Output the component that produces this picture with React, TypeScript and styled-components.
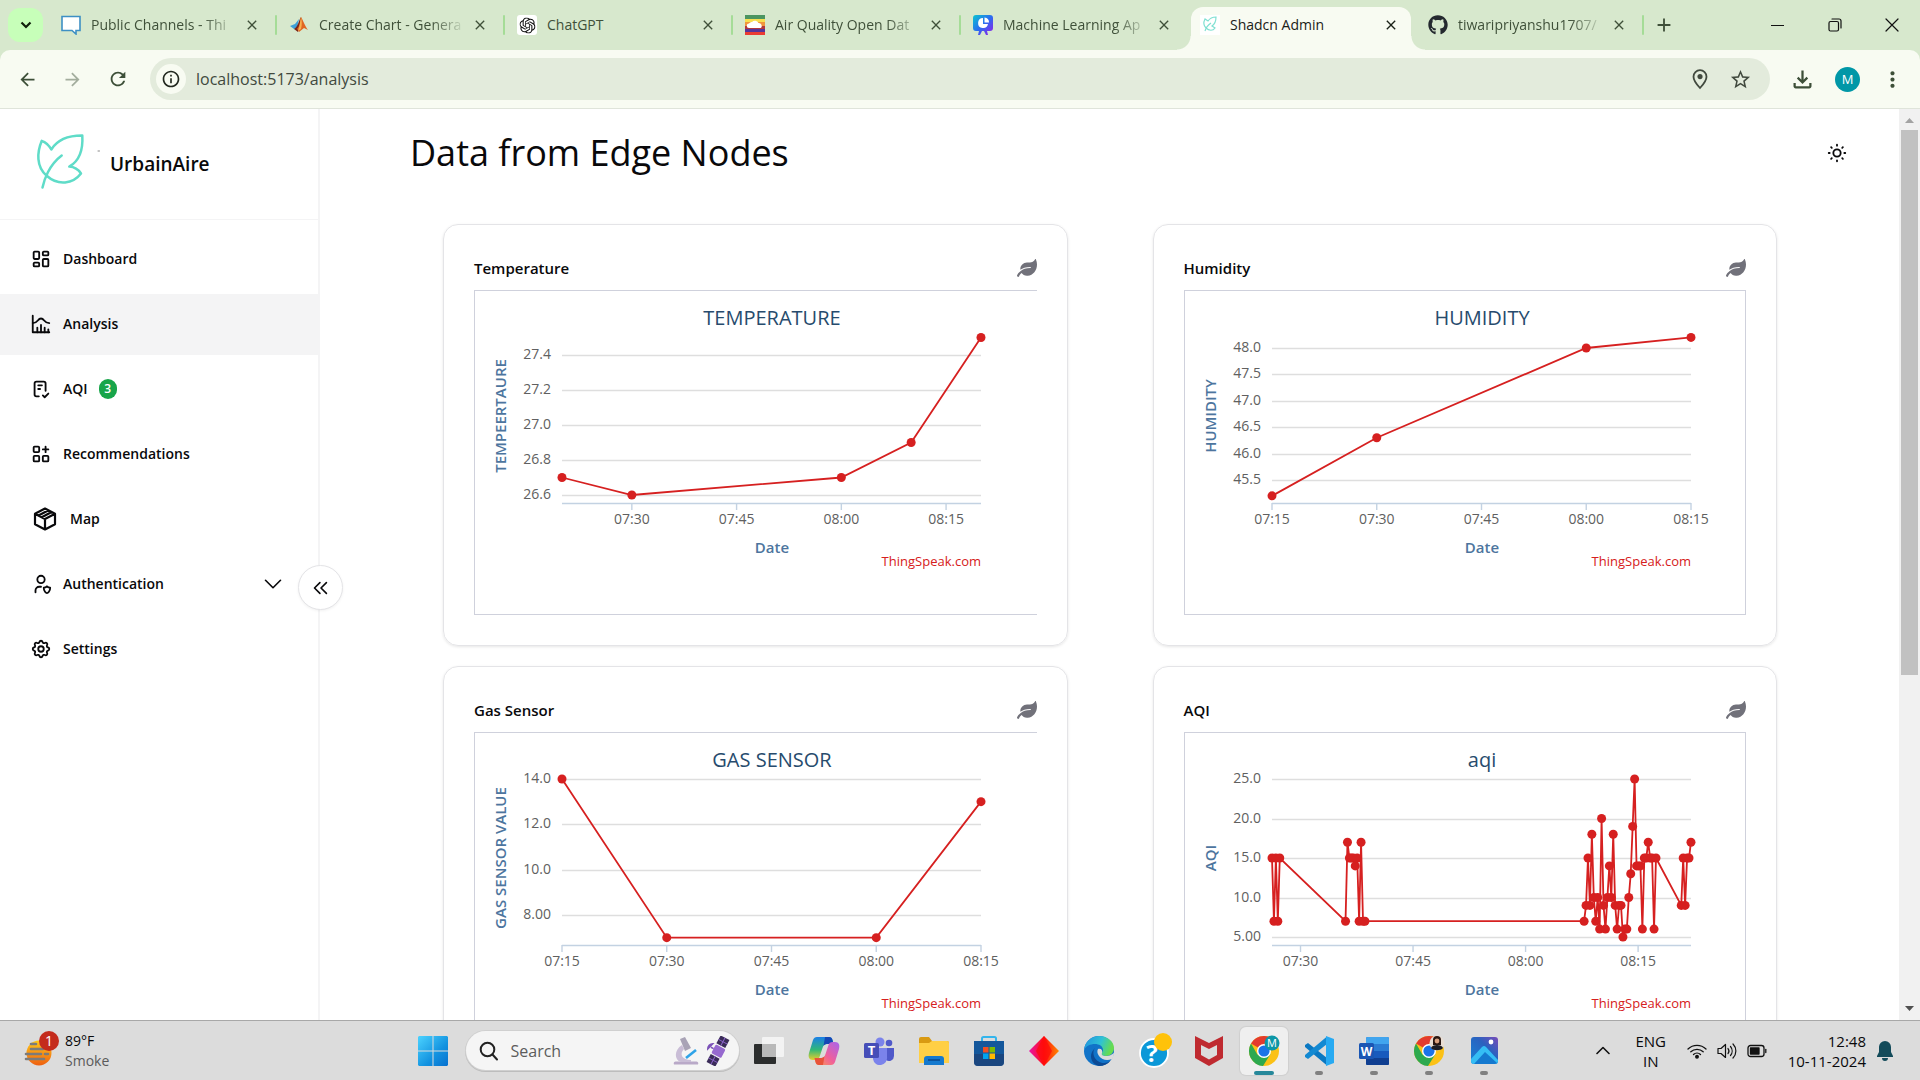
import React from "react";
import styled, { createGlobalStyle, css } from "styled-components";
import {
  TbApps,
  TbChartHistogram,
  TbChecklist,
  TbChevronDown,
  TbChevronsLeft,
  TbLayoutDashboard,
  TbSettings,
  TbSun,
  TbUserShield,
} from "react-icons/tb";
import { FaGithub, FaLeaf } from "react-icons/fa";
import { SiOpenai } from "react-icons/si";
import {
  MdArrowBack,
  MdArrowForward,
  MdClose,
  MdMoreVert,
  MdOutlineFileDownload,
  MdOutlineInfo,
  MdRefresh,
  MdStarOutline,
  MdAdd,
} from "react-icons/md";

const ui = `"Open Sans", "Noto Sans", sans-serif`;

const GlobalStyle = createGlobalStyle`
  *, *::before, *::after { box-sizing: border-box; }
  body { margin: 0; font-family: ${ui}; color: #09090b; background: #fff; }
  button, input { font: inherit; color: inherit; border: 0; background: none; padding: 0; margin: 0; outline: 0; }
  a { color: inherit; text-decoration: none; }
  svg { display: block; flex: none; }
`;

const Screen = styled.div`
  height: 100vh;
  display: flex;
  flex-direction: column;
  overflow: hidden;
`;

const center = css`
  display: flex;
  align-items: center;
  justify-content: center;
`;

/* ---------- browser chrome ---------- */

const TabStrip = styled.header`
  height: 50px;
  display: flex;
  background: #d7e8cd;
  padding-left: 8px;
  color: #3f5039;
`;

const TabSearch = styled.button`
  ${center}
  width: 35px;
  height: 34px;
  margin: 8px 6px 0 0;
  border-radius: 12px;
  background: #c7ffb9;
  color: #10200b;
`;

const Tab = styled.div<{ $active?: boolean; $divider?: boolean }>`
  position: relative;
  display: flex;
  align-items: center;
  width: 228px;
  height: 50px;
  padding: 0 13px 0 12px;
  ${(p) =>
    p.$divider &&
    css`
      &::after {
        content: "";
        position: absolute;
        right: 0;
        top: 15px;
        width: 2px;
        height: 20px;
        border-radius: 1px;
        background: #a5dc97;
      }
    `}
  ${(p) =>
    p.$active &&
    css`
      width: 220px;
      height: 43px;
      margin: 7px 5px 0 2px;
      padding: 0 8px 7px 9px;
      border-radius: 12px 12px 0 0;
      background: #f8fbf2;
      color: #1a2117;
      &::before,
      &::after {
        content: "";
        position: absolute;
        bottom: 0;
        width: 14px;
        height: 14px;
      }
      &::before {
        left: -14px;
        background: radial-gradient(circle at 0 0, transparent 13px, #f8fbf2 14px);
      }
      &::after {
        right: -14px;
        background: radial-gradient(circle at 100% 0, transparent 13px, #f8fbf2 14px);
      }
    `}
`;

const TabTitle = styled.button<{ $fade?: boolean }>`
  flex: 1;
  min-width: 0;
  margin: 0 2px 0 10px;
  font-size: 14px;
  line-height: 24px;
  text-align: left;
  white-space: nowrap;
  overflow: hidden;
  ${(p) => p.$fade && css`mask-image: linear-gradient(90deg, #000 76%, transparent 100%);`}
`;

const TabClose = styled.button`
  ${center}
  width: 24px;
  height: 24px;
`;

const NewTab = styled.button`
  ${center}
  width: 40px;
  height: 50px;
`;

const WindowControls = styled.div`
  display: flex;
  margin-left: auto;
`;

const WindowButton = styled.button`
  ${center}
  width: 57px;
  height: 50px;
  color: #000;
`;

const ToolbarBack = styled.div`
  background: #d7e8cd;
`;

const Toolbar = styled.div`
  height: 59px;
  display: flex;
  align-items: center;
  padding: 0 5px;
  background: #f8fbf2;
  border-radius: 10px 10px 0 0;
  border-bottom: 1px solid #dfe4da;
  color: #3d4f38;
`;

const ToolButton = styled.button<{ $dim?: boolean }>`
  ${center}
  width: 45px;
  height: 42px;
  opacity: ${(p) => (p.$dim ? 0.45 : 1)};
`;

const Omnibox = styled.label`
  flex: 1;
  height: 42px;
  margin: 0 10px;
  padding: 0 10px 0 6px;
  display: flex;
  align-items: center;
  border-radius: 21px;
  background: #e3ebdc;
  color: #41493e;
`;

const SiteInfo = styled.span`
  ${center}
  width: 30px;
  height: 30px;
  border-radius: 50%;
  background: #f8fbf2;
  color: #22281f;
`;

const Address = styled.input`
  flex: 1;
  margin-left: 10px;
  font-size: 16px;
  line-height: 24px;
`;

const OmniboxButton = styled.button`
  ${center}
  width: 40px;
  height: 40px;
`;

const Avatar = styled.span`
  ${center}
  width: 25px;
  height: 25px;
  border-radius: 50%;
  background: #0097a7;
  color: #fff;
  font-size: 13px;
`;

/* ---------- page ---------- */

const Page = styled.div`
  flex: 1;
  min-height: 0;
  display: flex;
`;

const Sidebar = styled.aside`
  position: relative;
  width: 320px;
  border-right: 2px solid #f4f4f5;
`;

const Brand = styled.div`
  height: 111px;
  display: flex;
  align-items: center;
  gap: 8px;
  padding-left: 36px;
  border-bottom: 1px solid #f4f4f5;
  font-size: 19px;
  font-weight: 600;
`;

const Nav = styled.nav`
  display: flex;
  flex-direction: column;
  gap: 4px;
  padding-top: 9px;
`;

const NavLink = styled.a<{ $active?: boolean; $wide?: boolean }>`
  display: flex;
  align-items: center;
  height: 61px;
  padding: 0 30px 2px ${(p) => (p.$wide ? 33 : 30)}px;
  gap: ${(p) => (p.$wide ? 13 : 11)}px;
  background: ${(p) => (p.$active ? "#f4f4f5" : "transparent")};
  font-size: 14px;
  font-weight: 600;
`;

const NavEnd = styled.span`
  margin-left: auto;
`;

const Badge = styled.span`
  ${center}
  width: 18px;
  height: 20px;
  border-radius: 9px;
  background: #18a54a;
  color: #fff;
  font-size: 12px;
`;

const Collapse = styled.button`
  ${center}
  position: absolute;
  top: 456px;
  right: -25px;
  width: 45px;
  height: 45px;
  border: 1px solid #e4e4e7;
  border-radius: 50%;
  background: #fff;
  box-shadow: 0 1px 3px rgba(0, 0, 0, 0.06);
`;

const Main = styled.main`
  flex: 1;
  min-width: 0;
  overflow: hidden;
`;

const Heading = styled.div`
  display: flex;
  align-items: center;
  justify-content: space-between;
  height: 87px;
  margin-bottom: 28px;
  padding: 0 50px 0 90px;
`;

const Title = styled.h1`
  margin: 0;
  font-size: 36px;
  font-weight: 400;
  line-height: 50px;
`;

const ThemeButton = styled.button`
  ${center}
  width: 24px;
  height: 24px;
`;

const Cards = styled.div`
  display: grid;
  grid-template-columns: 1fr 1fr;
  gap: 20px 85px;
  padding: 0 122px 0 123px;
`;

const Card = styled.section`
  min-width: 0;
  padding: 30px;
  border: 1px solid #e4e4e7;
  border-radius: 15px;
  box-shadow: 0 1px 3px rgba(0, 0, 0, 0.1);
`;

const CardHead = styled.div`
  display: flex;
  align-items: center;
  justify-content: space-between;
  height: 35px;
  padding-bottom: 9px;
  color: #71717a;
`;

const CardTitle = styled.h2`
  margin: 0;
  font-size: 15px;
  line-height: 24px;
  font-weight: 600;
  color: #09090b;
`;

const Frame = styled.div<{ $open?: boolean }>`
  height: 325px;
  overflow: hidden;
  border: 1px solid #cfd1dc;
  ${(p) => p.$open && css`border-right: 0;`}
`;

const ChartSvg = styled.svg`
  font-family: ${ui};
  .title { font-size: 20px; fill: #274b6d; text-anchor: middle; }
  .axis { font-size: 15px; font-weight: 600; fill: #4d759e; text-anchor: middle; }
  .tick { font-size: 14px; fill: #606060; text-anchor: middle; }
  .value { font-size: 14px; fill: #606060; text-anchor: end; }
  .credit { font-size: 13px; fill: #d62020; text-anchor: end; }
`;

const ScrollTrack = styled.div`
  width: 21px;
  display: flex;
  flex-direction: column;
  align-items: center;
  justify-content: space-between;
  padding: 9px 0;
  background: #f1f1f1;
`;

const ScrollThumb = styled.div`
  width: 17px;
  height: 61%;
  margin: 7px 0 auto;
  background: #c1c1c1;
`;

/* ---------- taskbar ---------- */

const Taskbar = styled.footer`
  height: 60px;
  display: flex;
  align-items: center;
  border-top: 1px solid #a8a8a8;
  background: #dcdcdc;
  font-size: 15px;
  line-height: 20px;
`;

const TaskSide = styled.div<{ $end?: boolean }>`
  flex: 1;
  display: flex;
  align-items: center;
  justify-content: ${(p) => (p.$end ? "flex-end" : "flex-start")};
  padding: ${(p) => (p.$end ? "0 27px 0 0" : "0 0 0 24px")};
`;

const Weather = styled.button`
  display: flex;
  align-items: center;
  gap: 5px;
  text-align: left;
  font-size: 14px;
  line-height: 20px;
`;

const Muted = styled.span`
  display: block;
  color: #5a5a5a;
`;

const TaskApps = styled.div`
  display: flex;
  align-items: center;
`;

const TaskButton = styled.button`
  ${center}
  position: relative;
  width: 55px;
  height: 59px;
`;

const Tile = styled.span<{ $active?: boolean }>`
  ${center}
  width: 48px;
  height: 48px;
  border-radius: 6px;
  ${(p) => p.$active && css`background: #efefef; box-shadow: 0 0 1px 1px rgba(0, 0, 0, 0.06);`}
`;

const Running = styled.span<{ $active?: boolean }>`
  position: absolute;
  bottom: 5px;
  width: ${(p) => (p.$active ? 20 : 8)}px;
  height: 4px;
  border-radius: 2px;
  background: ${(p) => (p.$active ? "#27889a" : "#808080")};
`;

const SearchBox = styled.label`
  display: flex;
  align-items: center;
  width: 273px;
  height: 39px;
  margin: 0 3px 0 5px;
  padding: 0 8px 0 13px;
  border-radius: 20px;
  background: #f5f5f5;
  box-shadow: 0 0 0 1px #d0d0d0, 0 1px 0 1px #bdbdbd;
`;

const SearchInput = styled.input`
  flex: 1;
  min-width: 0;
  margin-left: 12px;
  font-size: 16px;
  &::placeholder { color: #5c5c5c; opacity: 1; }
`;

const TrayButton = styled.button<{ $w: number }>`
  ${center}
  width: ${(p) => p.$w}px;
  height: 48px;
  line-height: 20px;
`;

const Clock = styled.button`
  margin-left: 16px;
  margin-right: 11px;
  text-align: right;
  line-height: 20px;
`;

/* ---------- charts ---------- */

type Point = [number, number];
type ChartData = {
  name: string;
  title: string;
  yTitle: string;
  open?: boolean;
  minutes: Point;
  ticks: [string, number][];
  rows: string[];
  rowY: Point;
  points: Point[];
};

const LEFT = 87;
const RIGHT = 506;

const quarter: [string, number][] = [
  ["07:15", 15],
  ["07:30", 30],
  ["07:45", 45],
  ["08:00", 60],
  ["08:15", 75],
];

const aqiSeries = (): Point[] => {
  const runs: [number, number[]][] = [
    [26.2, [15, 7, 15, 7, 15]],
    [36, [7, 17, 15, 15, 15, 14, 15, 7, 17, 7, 7]],
    [67.8, [7, 9, 15, 9, 18, 10, 7, 10, 6, 20, 9, 6, 10, 14, 10, 18, 9, 6, 9, 9, 5, 6, 6, 10, 13, 19, 25, 14, 14, 14, 6, 15, 15, 17, 15, 15, 6, 15]],
    [80.75, [9, 15, 9, 15, 15, 17]],
  ];
  return runs.flatMap(([start, values]) => values.map((v, i): Point => [start + i * 0.259, v]));
};

const charts: ChartData[] = [
  {
    name: "Temperature",
    title: "TEMPERATURE",
    yTitle: "TEMPEERTAURE",
    open: true,
    minutes: [20, 80],
    ticks: quarter.slice(1),
    rows: ["27.4", "27.2", "27.0", "26.8", "26.6"],
    rowY: [64, 204],
    points: [[20, 26.7], [30, 26.6], [60, 26.7], [70, 26.9], [80, 27.5]],
  },
  {
    name: "Humidity",
    title: "HUMIDITY",
    yTitle: "HUMIDITY",
    minutes: [15, 75],
    ticks: quarter,
    rows: ["48.0", "47.5", "47.0", "46.5", "46.0", "45.5"],
    rowY: [57, 189],
    points: [[15, 45.2], [30, 46.3], [60, 48], [75, 48.2]],
  },
  {
    name: "Gas Sensor",
    title: "GAS SENSOR",
    yTitle: "GAS SENSOR VALUE",
    open: true,
    minutes: [15, 75],
    ticks: quarter,
    rows: ["14.0", "12.0", "10.0", "8.00"],
    rowY: [46, 182],
    points: [[15, 14], [30, 7], [60, 7], [75, 13]],
  },
  {
    name: "AQI",
    title: "aqi",
    yTitle: "AQI",
    minutes: [26.2, 82.05],
    ticks: quarter.slice(1),
    rows: ["25.0", "20.0", "15.0", "10.0", "5.00"],
    rowY: [46, 204],
    points: aqiSeries(),
  },
];

function Chart({ data }: { data: ChartData }) {
  const { minutes, rows, rowY } = data;
  const x = (m: number) => LEFT + ((m - minutes[0]) / (minutes[1] - minutes[0])) * (RIGHT - LEFT);
  const hi = Number(rows[0]);
  const lo = Number(rows[rows.length - 1]);
  const y = (v: number) => rowY[0] + ((hi - v) / (hi - lo)) * (rowY[1] - rowY[0]);
  return (
    <ChartSvg width="562" height="323" viewBox="0 0 562 323" role="img" aria-label={data.name}>
      <text className="title" x="297" y="34">{data.title}</text>
      {rows.map((r) => (
        <g key={r}>
          <line x1={LEFT} x2={RIGHT} y1={Math.round(y(Number(r))) + 0.5} y2={Math.round(y(Number(r))) + 0.5} stroke="#dedede" strokeWidth="1.3" />
          <text className="value" x="76" y={Math.round(y(Number(r))) + 4}>{r}</text>
        </g>
      ))}
      <line x1={LEFT} x2={RIGHT} y1="212.5" y2="212.5" stroke="#c3d2e2" strokeWidth="1.4" />
      {data.ticks.map(([label, m]) => (
        <g key={label}>
          <line x1={x(m)} x2={x(m)} y1="212" y2="219" stroke="#c3d2e2" strokeWidth="1.4" />
          <text className="tick" x={x(m)} y="233">{label}</text>
        </g>
      ))}
      <text className="axis" x="297" y="262">Date</text>
      <text className="axis" transform="translate(31 125) rotate(-90)">{data.yTitle}</text>
      <polyline points={data.points.map(([m, v]) => `${x(m)},${y(v)}`).join(" ")} fill="none" stroke="#d62020" strokeWidth="1.8" />
      {data.points.map(([m, v], i) => (
        <circle key={i} cx={x(m)} cy={y(v)} r="4.5" fill="#d62020" />
      ))}
      <text className="credit" x={RIGHT} y="275">ThingSpeak.com</text>
    </ChartSvg>
  );
}

/* ---------- drawings ---------- */

const LeafLogo = () => (
  <svg width="66" height="60" viewBox="36 34 66 60" fill="none" stroke="#5fdcc8" strokeWidth="2.5" strokeLinecap="round" strokeLinejoin="round">
    <path d="M42.5 87.5C44 80 49 65 61.7 55.5M46.7 75.8C36 67 37 52 41.7 40.9C45 42 49 45.5 51.3 49.5C58 39 68 35.5 82.3 35.6C83 47 81 60 69.3 66.6C74 67 78 69 81 73.5C73 84 58 86 46.7 75.8" />
    <path d="M98 51h1.5" stroke="#888" strokeWidth="1" />
  </svg>
);

const BoxIcon = () => (
  <svg width="24" height="24" viewBox="0 0 24 24" fill="none" stroke="currentColor" strokeWidth="2.2" strokeLinejoin="round">
    <path d="M12 1.5l10 5.2v10.6l-10 5.2l-10-5.2V6.7zM2 6.7l10 5.2l10-5.2M12 11.9v10.6M5.5 8.5l10-5.2M8.7 10.2l10-5.2" />
  </svg>
);

const ChatIcon = () => (
  <svg width="20" height="20" viewBox="0 0 20 20">
    <path d="M1 1.5h18v14h-4v3.5l-4-3.5H1z" fill="#fff" stroke="#3d8fc4" strokeWidth="1.6" />
  </svg>
);

const MatlabIcon = () => (
  <svg width="20" height="20" viewBox="0 0 20 20">
    <path d="M1 11l5-2 4-5-2 9-3 1z" fill="#3e9fd8" />
    <path d="M5 14c4-2 5-9 7-12l1 6-4 9z" fill="#7a2418" />
    <path d="M12 2c2 3 4 9 7 13l-4-2-5 4c-1-2-1-2-2-3 3-3 3-8 4-12z" fill="#e06622" />
    <path d="M12 2c1 4 1 8 0 12l-3 2c2-5 2-10 3-14z" fill="#f8b04e" />
  </svg>
);

const GptIcon = () => (
  <svg width="20" height="20" viewBox="0 0 20 20">
    <rect width="20" height="20" rx="3" fill="#fff" />
    <SiOpenai x="2.5" y="2.5" width="15" height="15" color="#111" />
  </svg>
);

const AirIcon = () => (
  <svg width="20" height="20" viewBox="0 0 20 20">
    <rect width="20" height="4" fill="#4b9560" />
    <rect y="4" width="20" height="3" fill="#f7df4f" />
    <rect y="7" width="20" height="4" fill="#f0953e" />
    <rect y="11" width="20" height="3" fill="#b4373c" />
    <rect y="14" width="20" height="3" fill="#55349b" />
    <rect y="17" width="20" height="3" fill="#ea3c33" />
    <path d="M4 13a2 2 0 0 1 0-4.500 3 3 0 0 1 3-1.500 4 4 0 0 1 6.500 1 3 3 0 0 1 2.500 5z" fill="#fff" />
  </svg>
);

const MlIcon = () => (
  <svg width="20" height="20" viewBox="0 0 20 20">
    <defs>
      <linearGradient id="ml" x1="0" y1="0" x2="1" y2="1">
        <stop offset="0" stopColor="#09c6cf" />
        <stop offset=".5" stopColor="#2b6cf0" />
        <stop offset="1" stopColor="#9a1be8" />
      </linearGradient>
    </defs>
    <path d="M3 0h14a3 3 0 0 1 3 3v10a3 3 0 0 1-3 3h-3l1 4h-2l-2-4H9l-2 4H5l1-4H3a3 3 0 0 1-3-3V3a3 3 0 0 1 3-3z" fill="url(#ml)" />
    <path d="M10 3a5 5 0 1 0 5 6h-5z" fill="#fff" />
    <path d="M11.5 2.5V7.5H16a5 5 0 0 0-4.5-5z" fill="#fff" />
  </svg>
);

const LeafFavicon = () => (
  <svg width="20" height="20" viewBox="0 0 20 20" fill="none">
    <rect width="20" height="20" fill="#fff" />
    <path d="M5 16c1-4 3-6 6-8M6 13C3 10 4 6 5 4l3 2c2-3 5-4 8-4 0 4-1 7-4 9l3 2c-2 3-6 3-9 0" stroke="#7fe0d2" strokeWidth="1.2" />
  </svg>
);

const WeatherIcon = () => (
  <svg width="36" height="40" viewBox="0 0 36 40">
    <defs>
      <linearGradient id="sun" x1="0" y1="0" x2="0" y2="1">
        <stop offset="0" stopColor="#ffc91a" />
        <stop offset="1" stopColor="#ee5f10" />
      </linearGradient>
    </defs>
    <circle cx="15" cy="22" r="12.5" fill="url(#sun)" />
    <path d="M7 13h5M7 18h12M2 23h15M21 23h3M4 28h16M2 28h1" stroke="#7b7b7b" strokeWidth="2.6" strokeLinecap="round" />
    <circle cx="25" cy="10" r="10" fill="#c42b1c" />
    <text x="25" y="15" fill="#fff" fontSize="14" textAnchor="middle">1</text>
  </svg>
);

const StartIcon = () => (
  <svg width="30" height="30" viewBox="0 0 30 30">
    <defs>
      <linearGradient id="win" x1="0" y1="0" x2="30" y2="30" gradientUnits="userSpaceOnUse">
        <stop offset="0" stopColor="#4cd3ff" />
        <stop offset=".6" stopColor="#1393e0" />
        <stop offset="1" stopColor="#0670cf" />
      </linearGradient>
    </defs>
    <path d="M1 0h13.5v14.5H0V1zM15.5 0H29l1 1v13.5H15.5zM0 15.5h14.5V30H1l-1-1zM15.5 15.5H30V29l-1 1H15.5z" fill="url(#win)" />
  </svg>
);

const SearchGlass = () => (
  <svg width="20" height="20" viewBox="0 0 20 20" fill="none" stroke="#222" strokeWidth="2" strokeLinecap="round">
    <circle cx="8.5" cy="8.5" r="6.8" />
    <path d="M13.5 13.5L18 18.5" />
  </svg>
);

const SearchArt = () => (
  <svg width="58" height="30" viewBox="0 0 58 30">
    <path d="M3 25.500h20a2 2 0 0 1 2 3H1a2 2 0 0 1 2-3z" fill="#b9a9c8" />
    <path d="M9 9C1 14 1 24 8 26h10v-2c-9 0-12-6-7-11z" fill="#c9bdd6" />
    <path d="M7 3l5-2 6 11-6 3z" fill="#a9a3b6" />
    <path d="M13 22l10-8" stroke="#2fa3e8" strokeWidth="2.6" />
    <g transform="rotate(28 45 15)">
      <rect x="40" y="0" width="10" height="9" fill="#3a2c58" />
      <rect x="40" y="21" width="10" height="9" fill="#3a2c58" />
      <path d="M45 0v9M40 4.5h10M45 21v9M40 25.5h10" stroke="#8a63c8" strokeWidth="1" />
      <rect x="40" y="10" width="11" height="10" rx="1.5" fill="#9669cf" />
      <path d="M40 15h-3M37 11a5 5 0 0 0-2 7z" fill="#7c52b8" stroke="#7c52b8" strokeWidth="1.5" />
    </g>
  </svg>
);

const TaskViewIcon = () => (
  <svg width="30" height="30" viewBox="0 0 30 30">
    <rect y="8" width="22" height="20" rx="1" fill="#2b2d2d" />
    <rect x="8" y="1" width="22" height="20" rx="1" fill="#f4f4f4" fillOpacity=".92" />
    <rect x="8" y="8" width="14" height="13" fill="#b9b9b9" />
  </svg>
);

const CopilotIcon = () => (
  <svg width="32" height="30" viewBox="0 0 32 30">
    <defs>
      <linearGradient id="cpa" x1="0" y1="0" x2="0" y2="1">
        <stop offset="0" stopColor="#1b7fe8" />
        <stop offset=".55" stopColor="#30b878" />
        <stop offset="1" stopColor="#e8cf2c" />
      </linearGradient>
      <linearGradient id="cpb" x1="1" y1="0" x2="0" y2="1">
        <stop offset="0" stopColor="#a764ee" />
        <stop offset=".55" stopColor="#f0609a" />
        <stop offset="1" stopColor="#fba14a" />
      </linearGradient>
    </defs>
    <path d="M9 1h12c2 0 3 1 3.5 3l1 4h-6c-3 0-4 1-5 4l-3 9c-.6 2-2 3-4 3H5c-4 0-5-3-4-7L5 4c.8-2 2-3 4-3z" fill="url(#cpa)" />
    <path d="M17 1h4c2 0 3 1 3.5 3l1 4h-6c-2 0-3 .6-4 2z" fill="#1548b5" />
    <path d="M23 29H11c-2 0-3-1-3.5-3l-1-4h6c3 0 4-1 5-4l3-9c.6-2 2-3 4-3h2.5c4 0 5 3 4 7L27 26c-.8 2-2 3-4 3z" fill="url(#cpb)" />
    <path d="M15 29h-4c-2 0-3-1-3.5-3l-1-4h6c2 0 3-.6 4-2z" fill="#e8533a" />
  </svg>
);

const TeamsIcon = () => (
  <svg width="30" height="28" viewBox="0 0 30 28">
    <circle cx="16" cy="5" r="4.5" fill="#7b83eb" />
    <circle cx="25" cy="6" r="3.3" fill="#5059c9" />
    <path d="M20 11h10v8a5 5 0 0 1-8 4z" fill="#5059c9" />
    <path d="M9 11h14v9a7 7 0 0 1-14 2z" fill="#7b83eb" />
    <rect y="6" width="15" height="15" rx="1.5" fill="#464eb8" />
    <text x="7.5" y="18" fontSize="13" fontWeight="700" fill="#fff" textAnchor="middle">T</text>
  </svg>
);

const FolderIcon = () => (
  <svg width="30" height="28" viewBox="0 0 30 28">
    <path d="M0 2a2 2 0 0 1 2-2h8l3 4h15a2 2 0 0 1 2 2v4H0z" fill="#d99a12" />
    <path d="M0 6h10l3-2h15a2 2 0 0 1 2 2v20H0z" fill="#ffcf45" />
    <path d="M5 28v-6a3 3 0 0 1 3-3h14a3 3 0 0 1 3 3v6z" fill="#1579ce" />
    <path d="M9 23h12" stroke="#0a4a90" strokeWidth="1.6" />
  </svg>
);

const StoreIcon = () => (
  <svg width="30" height="30" viewBox="0 0 30 30">
    <path d="M8 6V2.5A1.5 1.5 0 0 1 9.5 1h11A1.5 1.5 0 0 1 22 2.5V6" fill="none" stroke="#34b5ec" strokeWidth="2" />
    <path d="M0 5h30v21a4 4 0 0 1-4 4H4a4 4 0 0 1-4-4z" fill="#14579b" />
    <path d="M0 18h30v8a4 4 0 0 1-4 4H4a4 4 0 0 1-4-4z" fill="#1c3f73" fillOpacity=".7" />
    <rect x="9" y="11" width="5.5" height="5.5" fill="#f25022" />
    <rect x="15.5" y="11" width="5.5" height="5.5" fill="#7fba00" />
    <rect x="9" y="17.5" width="5.5" height="5.5" fill="#00a4ef" />
    <rect x="15.5" y="17.5" width="5.5" height="5.5" fill="#ffb900" />
  </svg>
);

const DiamondIcon = () => (
  <svg width="30" height="30" viewBox="0 0 30 30">
    <defs>
      <linearGradient id="dia">
        <stop offset="0" stopColor="#e815a8" />
        <stop offset=".5" stopColor="#ff1010" />
        <stop offset="1" stopColor="#ff8a00" />
      </linearGradient>
    </defs>
    <path d="M15 0l15 15-15 15L0 15z" fill="url(#dia)" />
    <path d="M15 0l8 15-8 15-8-15z" fill="#ff0a0a" fillOpacity=".7" />
  </svg>
);

const EdgeIcon = () => (
  <svg width="30" height="30" viewBox="0 0 30 30">
    <defs>
      <linearGradient id="edge" x1="0" y1="0" x2="1" y2=".3">
        <stop offset="0" stopColor="#1f8fe0" />
        <stop offset=".6" stopColor="#2fc2d4" />
        <stop offset="1" stopColor="#66dc50" />
      </linearGradient>
    </defs>
    <circle cx="15" cy="15" r="15" fill="#1173c8" />
    <path d="M0 14C1 5 8 0 15 0c9 0 15 6 15 12 0 5-4 8-8 8-3 0-5-1-5-3 2-1 2-2 2-3 0-4-4-6-8-6-5 0-9 2-11 6z" fill="url(#edge)" />
    <path d="M11 12c-4 5 0 15 9 15 3 0 5-1 7-3-3 4-7 6-12 6C9 29 5 22 8 16c1-2 2-3 3-4z" fill="#0c4a94" />
    <path d="M14 13c3-1 5 1 4 4-1 2 1 3 4 3 3 .3 5-1 8-3 0 3-1 5-2 6-5 2-10 1-13-3-2-3-2-5-1-7z" fill="#dcdcdc" />
  </svg>
);

const HelpIcon = () => (
  <svg width="36" height="36" viewBox="0 0 36 36">
    <circle cx="18" cy="20" r="14" fill="#0b98d8" stroke="#fff" strokeWidth="1.8" />
    <text x="16" y="29" fontSize="24" fontWeight="700" fill="#fff" textAnchor="middle">?</text>
    <circle cx="27" cy="9" r="9" fill="#ffc20a" />
  </svg>
);

const McAfeeIcon = () => (
  <svg width="28" height="30" viewBox="0 0 28 30">
    <path d="M0 0l14 7 14-7v22l-14 8-14-8z" fill="#bf2a30" />
    <path d="M6 9l8 4 8-4v10l-8 4.5L6 19z" fill="#dcdcdc" />
  </svg>
);

const ChromeIcon = ({ person }: { person?: boolean }) => (
  <svg width="32" height="32" viewBox="0 0 32 32">
    <circle cx="16" cy="16" r="15" fill="#fbc116" />
    <path d="M16 16L3 8.5A15 15 0 0 1 29 8.500H16z" fill="#e33b2e" />
    <path d="M16 16L9.5 19.700 3 8.5A15 15 0 0 0 15 31l7.500-12z" fill="#2da94f" />
    <circle cx="16" cy="16" r="7" fill="#fff" />
    <circle cx="16" cy="16" r="5.6" fill="#1a73e8" />
    {person ? (
      <g>
        <circle cx="24" cy="8" r="7.5" fill="#e9ded4" />
        <path d="M20 10V5a4 4 0 0 1 8 0v5z" fill="#2a1712" />
        <circle cx="24" cy="6" r="2.4" fill="#d9a07e" />
        <path d="M18 13c1-4 11-4 12 0-2 3-10 3-12 0z" fill="#1d1d24" />
      </g>
    ) : (
      <g>
        <circle cx="24" cy="8" r="7.5" fill="#0d97a7" />
        <text x="24" y="12" fontSize="11" fill="#fff" textAnchor="middle">M</text>
      </g>
    )}
  </svg>
);

const VsCodeIcon = () => (
  <svg width="30" height="30" viewBox="0 0 30 30">
    <path d="M1 9l3-2 19 15v7.5L1 11z" fill="#0a78c2" />
    <path d="M1 21l3 2L23 8V.5L1 19z" fill="#1389d2" />
    <path d="M22 0l8 3v24l-8 3z" fill="#28aaf2" />
  </svg>
);

const WordIcon = () => (
  <svg width="30" height="28" viewBox="0 0 30 28">
    <rect x="7" width="23" height="28" rx="1.5" fill="#185abd" />
    <path d="M8.5 0h20A1.5 1.5 0 0 1 30 1.5V7H7V1.5A1.5 1.5 0 0 1 8.5 0z" fill="#41a5ee" />
    <rect x="7" y="7" width="23" height="7" fill="#2b7cd3" />
    <path d="M7 21h23v5.5a1.5 1.5 0 0 1-1.5 1.5h-20A1.5 1.5 0 0 1 7 26.5z" fill="#103f91" />
    <rect y="6" width="15" height="16" rx="1.5" fill="#1a56b4" />
    <text x="7.5" y="18.5" fontSize="12" fontWeight="700" fill="#fff" textAnchor="middle">W</text>
  </svg>
);

const PhotosIcon = () => (
  <svg width="27" height="27" viewBox="0 0 27 27">
    <defs>
      <linearGradient id="pho" x1="0" y1="1" x2="1" y2="0">
        <stop offset="0" stopColor="#1684d8" />
        <stop offset=".6" stopColor="#2a62bf" />
        <stop offset="1" stopColor="#7a4bb8" />
      </linearGradient>
    </defs>
    <rect width="27" height="27" rx="3" fill="url(#pho)" />
    <path d="M0 22l11-12a3 3 0 0 1 4 0l12 13v1a3 3 0 0 1-3 3H3a3 3 0 0 1-3-3z" fill="#35bdf4" />
    <path d="M3 27L14 15l12 11-2 1z" fill="#1579cf" />
    <circle cx="20" cy="5" r="2.4" fill="#fff" />
  </svg>
);

const line = { fill: "none", stroke: "#111", strokeWidth: 1.6, strokeLinecap: "round" as const, strokeLinejoin: "round" as const };

const tabs = [
  { title: "Public Channels - Thi", icon: <ChatIcon />, divider: true, fade: true },
  { title: "Create Chart - Genera", icon: <MatlabIcon />, divider: true, fade: true },
  { title: "ChatGPT", icon: <GptIcon />, divider: true },
  { title: "Air Quality Open Dat", icon: <AirIcon />, divider: true, fade: true },
  { title: "Machine Learning Ap", icon: <MlIcon />, fade: true },
  { title: "Shadcn Admin", icon: <LeafFavicon />, active: true },
  { title: "tiwaripriyanshu1707/", icon: <FaGithub size={20} color="#24292f" />, divider: true, fade: true },
];

const apps: { name: string; icon: React.ReactNode; running?: boolean; active?: boolean }[] = [
  { name: "Task view", icon: <TaskViewIcon /> },
  { name: "Copilot", icon: <CopilotIcon /> },
  { name: "Teams", icon: <TeamsIcon /> },
  { name: "File Explorer", icon: <FolderIcon /> },
  { name: "Store", icon: <StoreIcon /> },
  { name: "Diamond", icon: <DiamondIcon /> },
  { name: "Edge", icon: <EdgeIcon /> },
  { name: "Help", icon: <HelpIcon /> },
  { name: "McAfee", icon: <McAfeeIcon /> },
  { name: "Chrome", icon: <ChromeIcon />, running: true, active: true },
  { name: "VS Code", icon: <VsCodeIcon />, running: true },
  { name: "Word", icon: <WordIcon />, running: true },
  { name: "Chrome profile", icon: <ChromeIcon person />, running: true },
  { name: "Photos", icon: <PhotosIcon />, running: true },
];

export default function App() {
  return (
    <Screen>
      <GlobalStyle />
      <TabStrip>
        <TabSearch aria-label="Search tabs">
          <svg width="12" height="8" viewBox="0 0 12 8" fill="none" stroke="currentColor" strokeWidth="2.2">
            <path d="M1.5 1.5L6 6l4.5-4.5" />
          </svg>
        </TabSearch>
        {tabs.map((t) => (
          <Tab key={t.title} $active={t.active} $divider={t.divider}>
            {t.icon}
            <TabTitle $fade={t.fade}>{t.title}</TabTitle>
            <TabClose aria-label="Close tab">
              <MdClose size={16} />
            </TabClose>
          </Tab>
        ))}
        <NewTab aria-label="New tab">
          <MdAdd size={22} />
        </NewTab>
        <WindowControls>
          <WindowButton aria-label="Minimise">
            <svg width="13" height="13" {...line} strokeWidth="1.2"><path d="M0 6.5h13" /></svg>
          </WindowButton>
          <WindowButton aria-label="Restore">
            <svg width="14" height="14" viewBox="0 0 14 14" {...line} strokeWidth="1.2">
              <rect x="1" y="3.5" width="9.5" height="9.5" rx="1.5" />
              <path d="M4 1h7a2 2 0 0 1 2 2v7" />
            </svg>
          </WindowButton>
          <WindowButton aria-label="Close">
            <svg width="14" height="14" viewBox="0 0 14 14" {...line} strokeWidth="1.2"><path d="M1 1l12 12M13 1L1 13" /></svg>
          </WindowButton>
        </WindowControls>
      </TabStrip>

      <ToolbarBack>
        <Toolbar>
          <ToolButton aria-label="Back"><MdArrowBack size={21} /></ToolButton>
          <ToolButton aria-label="Forward" $dim><MdArrowForward size={21} /></ToolButton>
          <ToolButton aria-label="Reload"><MdRefresh size={22} /></ToolButton>
          <Omnibox>
            <SiteInfo><MdOutlineInfo size={20} /></SiteInfo>
            <Address aria-label="Address" defaultValue="localhost:5173/analysis" />
            <OmniboxButton aria-label="Location">
              <svg width="16" height="21" viewBox="0 0 16 21" fill="none" stroke="currentColor" strokeWidth="1.8">
                <path d="M8 1.2a6.5 6.5 0 0 0-6.5 6.5C1.5 12 8 19 8 19s6.5-7 6.5-11.3A6.5 6.5 0 0 0 8 1.2z" />
                <circle cx="8" cy="7.6" r="1.7" fill="currentColor" />
              </svg>
            </OmniboxButton>
            <OmniboxButton aria-label="Bookmark"><MdStarOutline size={23} /></OmniboxButton>
          </Omnibox>
          <ToolButton aria-label="Downloads"><MdOutlineFileDownload size={27} /></ToolButton>
          <ToolButton aria-label="Profile"><Avatar>M</Avatar></ToolButton>
          <ToolButton aria-label="Menu"><MdMoreVert size={25} /></ToolButton>
        </Toolbar>
      </ToolbarBack>

      <Page>
        <Sidebar>
          <Brand>
            <LeafLogo />
            <span>UrbainAire</span>
          </Brand>
          <Nav>
            <NavLink href="#dashboard"><TbLayoutDashboard size={22} />Dashboard</NavLink>
            <NavLink href="#analysis" $active><TbChartHistogram size={22} />Analysis</NavLink>
            <NavLink href="#aqi"><TbChecklist size={22} />AQI<Badge>3</Badge></NavLink>
            <NavLink href="#recommendations"><TbApps size={22} />Recommendations</NavLink>
            <NavLink href="#map" $wide><BoxIcon />Map</NavLink>
            <NavLink href="#authentication">
              <TbUserShield size={22} />Authentication
              <NavEnd><TbChevronDown size={30} strokeWidth={1.3} /></NavEnd>
            </NavLink>
            <NavLink href="#settings"><TbSettings size={22} />Settings</NavLink>
          </Nav>
          <Collapse aria-label="Collapse sidebar"><TbChevronsLeft size={26} strokeWidth={1.5} /></Collapse>
        </Sidebar>

        <Main>
          <Heading>
            <Title>Data from Edge Nodes</Title>
            <ThemeButton aria-label="Toggle theme"><TbSun size={22} /></ThemeButton>
          </Heading>
          <Cards>
            {charts.map((c) => (
              <Card key={c.name}>
                <CardHead>
                  <CardTitle>{c.name}</CardTitle>
                  <FaLeaf size={20} />
                </CardHead>
                <Frame $open={c.open}><Chart data={c} /></Frame>
              </Card>
            ))}
          </Cards>
        </Main>

        <ScrollTrack aria-hidden>
          <svg width="9" height="5"><path d="M0 5L4.5 0 9 5z" fill="#a3a3a3" /></svg>
          <ScrollThumb />
          <svg width="9" height="5"><path d="M0 0l4.5 5L9 0z" fill="#505050" /></svg>
        </ScrollTrack>
      </Page>

      <Taskbar>
        <TaskSide>
          <Weather>
            <WeatherIcon />
            <span>89°F<Muted>Smoke</Muted></span>
          </Weather>
        </TaskSide>
        <TaskApps>
          <TaskButton aria-label="Start"><StartIcon /></TaskButton>
          <SearchBox>
            <SearchGlass />
            <SearchInput placeholder="Search" aria-label="Search" />
            <SearchArt />
          </SearchBox>
          {apps.map((a) => (
            <TaskButton key={a.name} aria-label={a.name}>
              <Tile $active={a.active}>{a.icon}</Tile>
              {a.running && <Running $active={a.active} />}
            </TaskButton>
          ))}
        </TaskApps>
        <TaskSide $end>
          <TrayButton $w={34} aria-label="Hidden icons">
            <svg width="14" height="9" viewBox="0 0 14 9" {...line}><path d="M1 7.5l6-6 6 6" /></svg>
          </TrayButton>
          <TrayButton $w={62}>ENG<br />IN</TrayButton>
          <TrayButton $w={30} aria-label="Network">
            <svg width="20" height="16" viewBox="0 0 20 16" {...line} strokeWidth="1.3">
              <path d="M1 6a13 13 0 0 1 18 0M3.8 8.8a9 9 0 0 1 12.4 0M6.5 11.5a5 5 0 0 1 7 0" />
              <circle cx="10" cy="13.8" r="1.3" fill="#111" />
            </svg>
          </TrayButton>
          <TrayButton $w={30} aria-label="Volume">
            <svg width="20" height="18" viewBox="0 0 20 18" {...line} strokeWidth="1.2">
              <path d="M1 6.5h3l4.5-4v13L4 11.5H1zM11 6.5a4 4 0 0 1 0 5M13.5 4.5a7 7 0 0 1 0 9M16 2a10 10 0 0 1 0 14" />
            </svg>
          </TrayButton>
          <TrayButton $w={30} aria-label="Battery">
            <svg width="20" height="14" viewBox="0 0 20 14" {...line} strokeWidth="1.3">
              <rect x="1" y="1.5" width="16" height="11" rx="2.5" />
              <rect x="3.5" y="4" width="8.5" height="6" fill="#111" />
              <path d="M18.8 5.5v3" />
            </svg>
          </TrayButton>
          <Clock>12:48<br />10-11-2024</Clock>
          <svg width="16" height="20" viewBox="0 0 16 20" role="img" aria-label="Notifications">
            <path d="M8 0a6 6 0 0 0-6 6v5l-2 4v1h16v-1l-2-4V6a6 6 0 0 0-6-6zM5 17h6a3 3 0 0 1-6 0z" fill="#134b5a" />
          </svg>
        </TaskSide>
      </Taskbar>
    </Screen>
  );
}
